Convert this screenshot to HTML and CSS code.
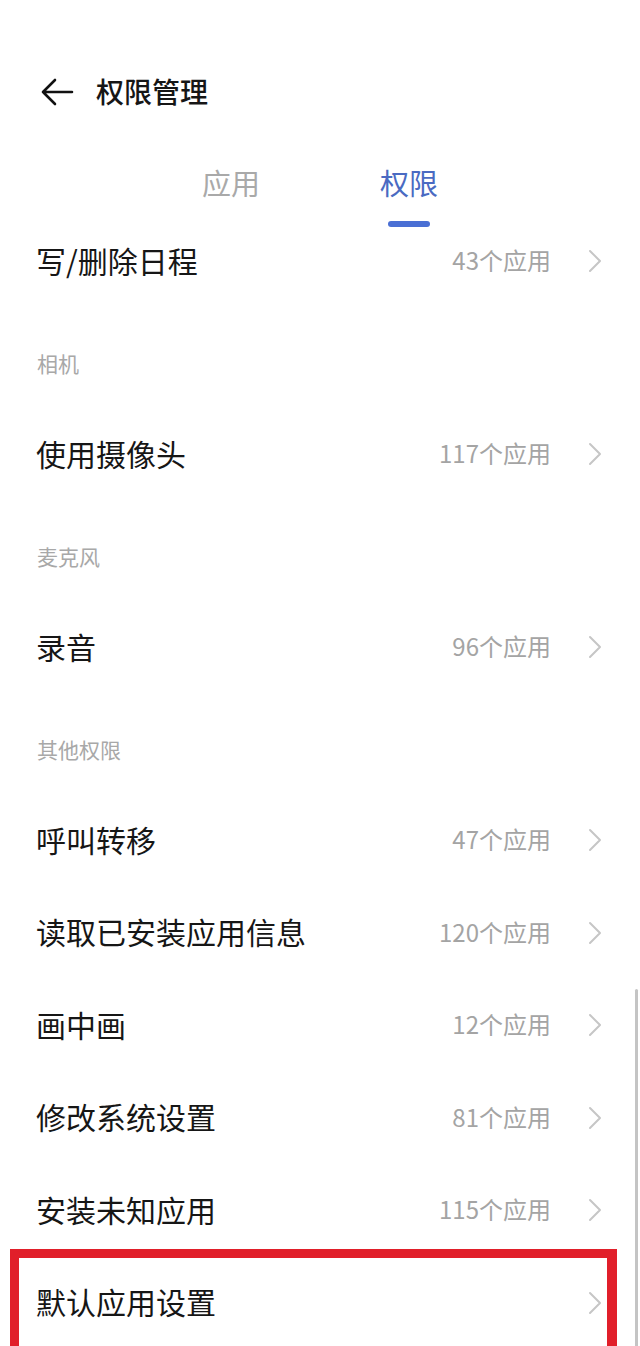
FILE: index.html
```html
<!DOCTYPE html>
<html lang="zh-CN">
<head>
    <meta charset="UTF-8">
    <meta name="viewport" content="width=device-width, initial-scale=1.0">
    <title>权限管理</title>
    <link rel="stylesheet" href="styles.css">
</head>
<body>
    <!-- Top bar -->
    <div class="topbar">
        <svg class="back" width="34" height="34" viewBox="0 0 34 34">
            <path d="M32 17H3M15 5L3 17l12 12" fill="none" stroke="#111" stroke-width="2.6" stroke-linecap="round" stroke-linejoin="round"/>
        </svg>
        <h1 class="title">权限管理</h1>
    </div>

    <!-- Tabs -->
    <div class="tabs">
        <div class="tab">应用</div>
        <div class="tab active">权限</div>
    </div>

    <!-- Permission list -->
    <div class="list">
        <div class="row">
            <span class="name">写/删除日程</span>
            <span class="count">43个应用</span>
            <svg class="chev" width="14" height="24" viewBox="0 0 14 24"><path d="M2 2l10 10L2 22" fill="none" stroke="#c6c6c6" stroke-width="2" stroke-linecap="round" stroke-linejoin="round"/></svg>
        </div>

        <div class="section">相机</div>
        <div class="row">
            <span class="name">使用摄像头</span>
            <span class="count">117个应用</span>
            <svg class="chev" width="14" height="24" viewBox="0 0 14 24"><path d="M2 2l10 10L2 22" fill="none" stroke="#c6c6c6" stroke-width="2" stroke-linecap="round" stroke-linejoin="round"/></svg>
        </div>

        <div class="section">麦克风</div>
        <div class="row">
            <span class="name">录音</span>
            <span class="count">96个应用</span>
            <svg class="chev" width="14" height="24" viewBox="0 0 14 24"><path d="M2 2l10 10L2 22" fill="none" stroke="#c6c6c6" stroke-width="2" stroke-linecap="round" stroke-linejoin="round"/></svg>
        </div>

        <div class="section">其他权限</div>
        <div class="row">
            <span class="name">呼叫转移</span>
            <span class="count">47个应用</span>
            <svg class="chev" width="14" height="24" viewBox="0 0 14 24"><path d="M2 2l10 10L2 22" fill="none" stroke="#c6c6c6" stroke-width="2" stroke-linecap="round" stroke-linejoin="round"/></svg>
        </div>
        <div class="row">
            <span class="name">读取已安装应用信息</span>
            <span class="count">120个应用</span>
            <svg class="chev" width="14" height="24" viewBox="0 0 14 24"><path d="M2 2l10 10L2 22" fill="none" stroke="#c6c6c6" stroke-width="2" stroke-linecap="round" stroke-linejoin="round"/></svg>
        </div>
        <div class="row">
            <span class="name">画中画</span>
            <span class="count">12个应用</span>
            <svg class="chev" width="14" height="24" viewBox="0 0 14 24"><path d="M2 2l10 10L2 22" fill="none" stroke="#c6c6c6" stroke-width="2" stroke-linecap="round" stroke-linejoin="round"/></svg>
        </div>
        <div class="row">
            <span class="name">修改系统设置</span>
            <span class="count">81个应用</span>
            <svg class="chev" width="14" height="24" viewBox="0 0 14 24"><path d="M2 2l10 10L2 22" fill="none" stroke="#c6c6c6" stroke-width="2" stroke-linecap="round" stroke-linejoin="round"/></svg>
        </div>
        <div class="row">
            <span class="name">安装未知应用</span>
            <span class="count">115个应用</span>
            <svg class="chev" width="14" height="24" viewBox="0 0 14 24"><path d="M2 2l10 10L2 22" fill="none" stroke="#c6c6c6" stroke-width="2" stroke-linecap="round" stroke-linejoin="round"/></svg>
        </div>
        <div class="row marked">
            <span class="name">默认应用设置</span>
            <span class="count"></span>
            <svg class="chev" width="14" height="24" viewBox="0 0 14 24"><path d="M2 2l10 10L2 22" fill="none" stroke="#c6c6c6" stroke-width="2" stroke-linecap="round" stroke-linejoin="round"/></svg>
        </div>
    </div>

    <!-- Scroll indicator -->
    <div class="scrollbar"></div>
</body>
</html>
```

FILE: styles.css
```css
body {
    font-family: "Noto Sans CJK SC", "Noto Sans", sans-serif;
    margin: 0;
    padding: 0;
    background-color: #ffffff;
    color: #161616;
    position: relative;
    height: 1346px;
    overflow: hidden;
}

.topbar {
    display: flex;
    align-items: center;
    height: 60px;
    padding: 61px 0 0 40px;
    gap: 22px;
}

.back {
    margin-top: 2px;
}

.title {
    margin: 0;
    font-size: 28px;
    font-weight: 500;
    line-height: 40px;
}

.tabs {
    display: flex;
    justify-content: center;
    align-items: flex-start;
    padding-top: 42px;
    margin-bottom: -11px;
}

.tab {
    width: 178px;
    text-align: center;
    font-size: 29px;
    line-height: 38px;
    color: #a9a9a9;
}

.tab.active {
    color: #4a6ac2;
}

.tab.active::after {
    content: "";
    display: block;
    width: 42px;
    height: 6px;
    margin: 20px auto 0;
    border-radius: 3px;
    background-color: #4a6fd4;
}

.row {
    display: flex;
    align-items: center;
    height: 92.5px;
    box-sizing: border-box;
    padding: 0 38px 5px 36px;
    position: relative;
}

.chev {
    margin-top: 3px;
}

.name {
    flex: 1;
    font-size: 30px;
    line-height: 40px;
}

.count {
    font-size: 24px;
    color: #a4a4a4;
    margin-right: 37px;
}

.section {
    height: 100.5px;
    box-sizing: border-box;
    padding: 40px 0 0 37px;
    font-size: 21px;
    line-height: 29px;
    color: #a8a8a8;
}

/* red annotation frame */
.row.marked::before {
    content: "";
    position: absolute;
    top: -9px;
    left: 10px;
    right: 23px;
    bottom: -40px;
    border: 9px solid #e11f2a;
    border-right-width: 10px;
}

.scrollbar {
    position: absolute;
    top: 989px;
    right: 2px;
    bottom: 0;
    width: 3px;
    border-radius: 2px 2px 0 0;
    background-color: #c4c4c4;
}
```
